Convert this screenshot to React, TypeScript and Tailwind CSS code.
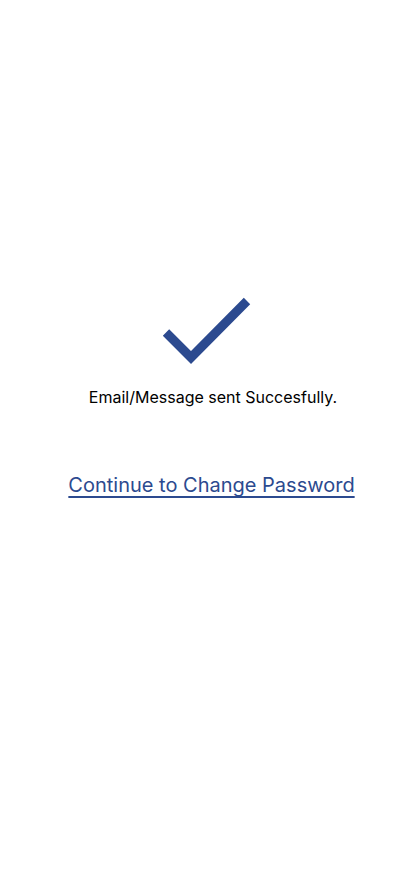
import React from "react";

const CheckMark = () => (
  <svg width="95" height="72" viewBox="0 0 95 72" fill="none">
    <polyline
      points="6,37.5 31,62.5 87,6"
      stroke="#2c4a8f"
      strokeWidth="9"
      strokeLinecap="butt"
      strokeLinejoin="miter"
    />
  </svg>
);

export default function App() {
  return (
    <div
      className="min-h-screen bg-white flex flex-col items-center pt-[295px]"
      style={{ fontFamily: "Inter, 'Noto Sans', sans-serif" }}
    >
      <div className="w-[95px] h-[72px]">
        <CheckMark />
      </div>
      <p className="mt-[20px] ml-[12px] text-[16px] leading-[20px] text-black">
        Email/Message sent Succesfully.
      </p>
      <a
        href="#"
        className="mt-[64px] ml-[9px] text-[20px] leading-[28px] text-[#2c4a8f] underline underline-offset-[4px]"
      >
        Continue to Change Password
      </a>
    </div>
  );
}
